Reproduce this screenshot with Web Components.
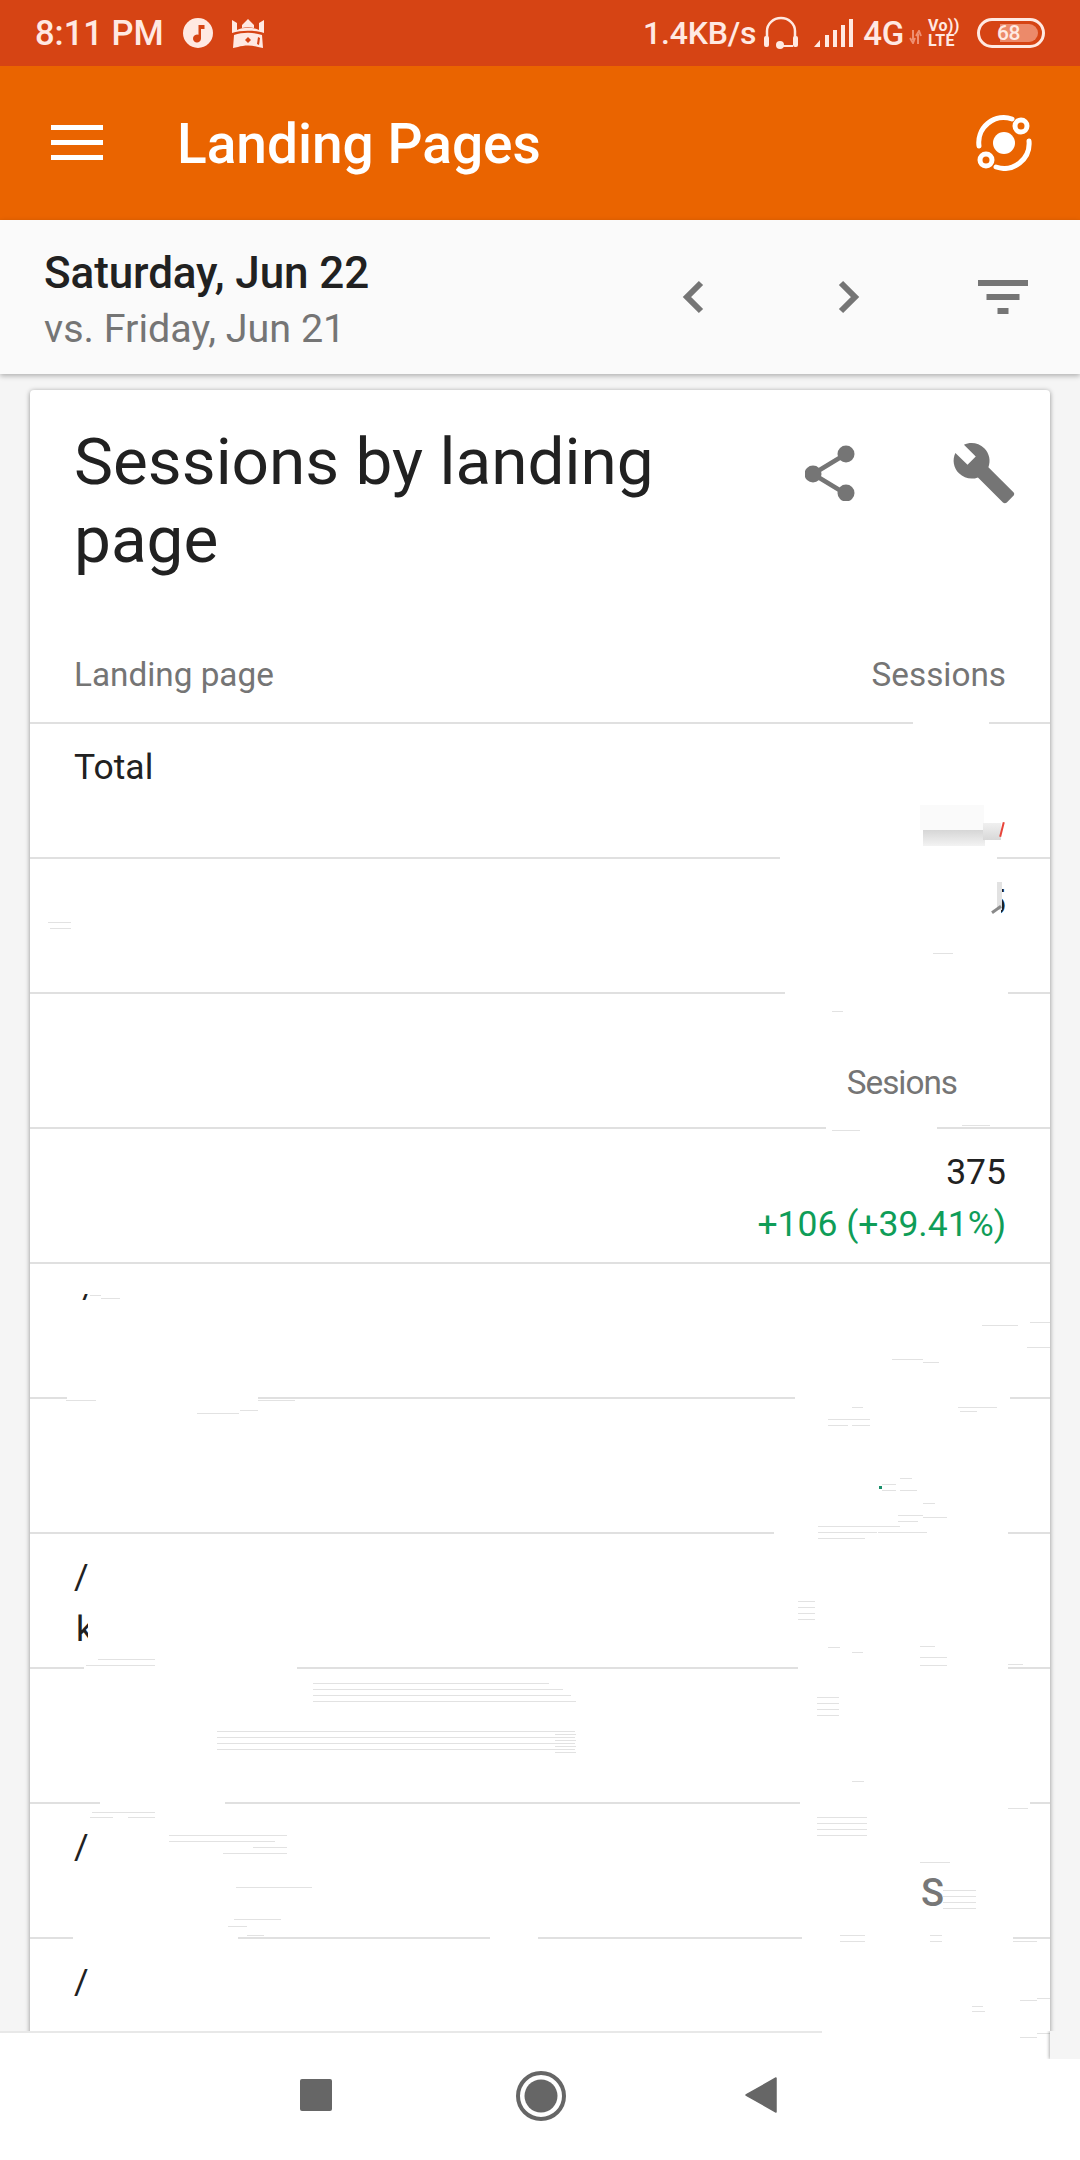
<!DOCTYPE html>
<html><head><meta charset="utf-8"><title>Landing Pages</title>
<style>
html,body{margin:0;padding:0;background:#f5f5f5}
body{font-family:Roboto,"Liberation Sans",sans-serif}
</style></head><body>
<app-page>
  <status-bar></status-bar>
  <app-bar>Landing Pages</app-bar>
  <date-bar><span slot="main">Saturday, Jun 22</span><span slot="sub">vs. Friday, Jun 21</span></date-bar>
  <page-main>
    <report-card>
      <span slot="title">Sessions by landing page</span>
      <report-row kind="head" line="30-913,989-1050"><span slot="left">Landing page</span><span slot="right">Sessions</span></report-row>
      <report-row line="30-780,997-1050"><span slot="left">Total</span></report-row>
      <report-row line="30-785,1008-1050"><span slot="right" style="display:block;clip-path:inset(0 0 0 15px);">5</span></report-row>
      <report-row line="30-826,937-1050"><span slot="right" style="display:block;height:52px"></span><span slot="right" style="display:block;margin:-6px 49px 0 0;color:#757575;font-size:33.3px;letter-spacing:-1px">Sesions</span></report-row>
      <report-row line="30-1050"><span slot="right" style="display:block">375</span><span slot="right" style="display:block;color:#0f9d58">+106 (+39.41%)</span></report-row>
      <report-row line="30-67,258-795,1010-1050"><span slot="left" style="display:block;clip-path:inset(0 0 33px 8px)">/</span></report-row>
      <report-row line="30-774,1008-1050"></report-row>
      <report-row line="30-84,297-798,1008-1050"><span slot="left" style="display:block">/</span><span slot="left" style="display:block;width:fit-content;clip-path:inset(0 6px 13px 0);margin-left:2px">k</span></report-row>
      <report-row line="30-100,225-800,1030-1050"></report-row>
      <report-row line="30-73,238-490,538-802,1013-1050"><span slot="left" style="display:block">/</span></report-row>
      <report-row line=""><span slot="left" style="display:block">/</span></report-row>
    </report-card>
  </page-main>
  <nav-bar></nav-bar>
  <stray-marks></stray-marks>
</app-page>
<script>
function def(name, html, init){
  customElements.define(name, class extends HTMLElement{
    constructor(){super();this.attachShadow({mode:'open'}).innerHTML=html;}
    connectedCallback(){ if(init) init.call(this,this.shadowRoot); }
  });
}
def('app-page',`<style>:host{display:flex;flex-direction:column;position:relative;width:1080px;height:2160px;overflow:hidden;background:#f5f5f5}</style><slot></slot>`);

def('status-bar',`<style>
:host{display:flex;align-items:center;height:66px;flex:none;background:#d64414;color:#ffe9e2;font:500 32px/1 Roboto,sans-serif;padding:0 35px 0 35px;box-sizing:border-box}
svg{display:block;flex:none}
.sp{flex:1}
.t{white-space:nowrap}
.lte{display:flex;flex-direction:column;align-items:flex-start;font:700 16px/15px Roboto,sans-serif;margin-left:6px;width:34px;letter-spacing:.3px}
.batt{margin-left:15px;position:relative;width:68px;height:30px;box-sizing:border-box;border:3px solid #ffe9e2;border-radius:15px;flex:none}
.batt i{position:absolute;left:20px;top:3px;bottom:3px;width:38px;background:#ec8a6a;border-radius:0 9px 9px 0}
.batt b{position:absolute;left:17px;top:0;font:500 21px/24px Roboto,sans-serif;letter-spacing:-.5px;color:#ffe9e2}
</style>
<span class="t" style="font-size:34.5px">8:11 PM</span>
<svg style="margin-left:19px" width="30" height="30" viewBox="0 0 30 30"><circle cx="15" cy="15" r="15" fill="#ffe9e2"/><path d="M15.500 7h6v4h-3.500v9.500a4 4 0 1 1-2.500-3.700z" fill="#d64414"/></svg>
<svg style="margin-left:18px" width="34" height="31" viewBox="0 0 34 31"><path d="M1 2l5 3v7c6-3 16-3 22 0V5l5-3v13c-9-3-23-3-32 0z" fill="#ffe9e2"/><path d="M11 7l6-6 6 6v3c-4-1-8-1-12 0z" fill="#ffe9e2"/><path d="M3 17c9-3 19-3 28 0l1 13-5-1c-6-2-14-2-20 0l-5 1z" fill="#ffe9e2"/><path d="M17 19l3 3-3 3-3-3z" fill="#d64414"/><path d="M27 19l2 1-1 7-2-1z" fill="#d64414"/></svg>
<span class="sp"></span>
<span class="t" style="letter-spacing:-.2px">1.4KB/s</span>
<svg style="margin-left:7px" width="36" height="34" viewBox="0 0 36 34"><path d="M4 24V15a14 13 0 0 1 28 0v9" fill="none" stroke="#ffe9e2" stroke-width="2.500"/><rect x="1" y="20" width="5" height="11" rx="2" fill="#ffe9e2"/><rect x="30" y="20" width="5" height="11" rx="2" fill="#ffe9e2"/><path d="M14 30h16" stroke="#ffe9e2" stroke-width="2"/><circle cx="17" cy="29" r="4" fill="#ffe9e2"/></svg>
<svg style="margin-left:15px" width="40" height="30" viewBox="0 0 40 30"><path d="M0 29L6 22V29zM11 17h4v12h-4zM19 12h4v17h-4zM27 7h4v22h-4zM35 1h4v28h-4z" fill="#ffe9e2"/></svg>
<span class="t" style="margin-left:9px;font-size:33px;letter-spacing:-.3px">4G</span>
<svg style="margin-left:5px;margin-top:8px" width="13" height="14" viewBox="0 0 13 14"><path d="M4 0v10M1 8l3 5 2-5" stroke="#ee8f72" stroke-width="2" fill="none"/><path d="M9 14V4M7 6l3-5 2 5" stroke="#ee8f72" stroke-width="2" fill="none"/></svg>
<span class="lte"><span>Vo))</span><span>LTE</span></span>
<span class="batt"><i></i><b>68</b></span>`);

def('app-bar',`<style>
:host{display:flex;align-items:center;height:154px;flex:none;background:#ea6400;color:#fff;box-sizing:border-box;padding:0 48px 0 51px}
.t{font:500 55px/1 Roboto,sans-serif;margin-left:74px;flex:1;position:relative;top:1px}
svg{display:block;flex:none}
</style>
<svg width="52" height="36" viewBox="0 0 52 36"><path d="M0 0h52v5H0zM0 15h52v5H0zM0 30h52v5H0z" fill="#fff"/></svg>
<span class="t"><slot></slot></span>
<svg width="56" height="56" viewBox="0 0 56 56"><circle cx="28" cy="28" r="11" fill="#fff"/><path d="M3 31A25 25 0 0 1 36 4M53 26A25 25 0 0 1 20 52" fill="none" stroke="#fff" stroke-width="5" stroke-linecap="round"/><circle cx="45" cy="11" r="6" fill="#ea6400" stroke="#fff" stroke-width="5"/><circle cx="10" cy="45" r="6" fill="#ea6400" stroke="#fff" stroke-width="5"/></svg>`);

def('date-bar',`<style>
:host{display:flex;align-items:flex-start;height:154px;flex:none;box-sizing:border-box;background:#fafafa;position:relative;z-index:2;box-shadow:0 2px 5px rgba(0,0,0,.28);padding:0 52px 0 44px}
.c{flex:1;padding-top:28px}
.m{display:block;font:500 44px/50px Roboto,sans-serif;color:#212121;letter-spacing:-.1px}
.s{display:block;font:400 39.5px/46px Roboto,sans-serif;color:#757575;margin-top:8px}
svg{display:block;flex:none;margin-top:60px}
</style>
<div class="c"><span class="m"><slot name="main"></slot></span><span class="s"><slot name="sub"></slot></span></div>
<svg width="22" height="34" viewBox="0 0 22 34"><path d="M19 3L5 17l14 14" fill="none" stroke="#757575" stroke-width="6"/></svg>
<svg style="margin-left:134px" width="22" height="34" viewBox="0 0 22 34"><path d="M3 3l14 14L3 31" fill="none" stroke="#757575" stroke-width="6"/></svg>
<svg style="margin-left:118px" width="50" height="34" viewBox="0 0 50 34"><path d="M0 0h50v6H0zM8.500 14h33v6h-33zM19.500 28h11v6h-11z" fill="#757575"/></svg>`);

def('page-main',`<style>:host{display:block;flex:1;min-height:0;overflow:hidden;padding:16px 30px 0;box-sizing:border-box}</style><slot></slot>`);

def('report-card',`<style>
:host{display:block;background:#fff;border-radius:4px 4px 0 0;box-shadow:0 1px 5px rgba(0,0,0,.42);color:#212121;height:2000px}
.h{display:flex;height:234px;padding:33px 0 0 44px;box-sizing:border-box}
.t{font:400 65.7px/78px Roboto,sans-serif;width:640px;color:#212121}
svg{display:block;flex:none}
</style>
<div class="h"><div class="t"><slot name="title"></slot></div>
<svg style="margin:22px 0 0 91px" width="50" height="56" viewBox="0 0 50 56"><path d="M8 29L41 9M8 29l33 20" stroke="#757575" stroke-width="4.500" fill="none"/><circle cx="8" cy="29" r="8.500" fill="#757575"/><circle cx="41" cy="9" r="8.500" fill="#757575"/><circle cx="41" cy="48" r="8.500" fill="#757575"/></svg>
<svg style="margin:17px 0 0 96px" width="66" height="66" viewBox="0 0 24 24"><path d="M22.700 19l-9.100-9.100c.9-2.300.4-5-1.500-6.900-2-2-5-2.400-7.400-1.300L9 6 6 9 1.600 4.700C.4 7.100.9 10.100 2.900 12.100c1.900 1.900 4.600 2.400 6.900 1.500l9.100 9.100c.4.4 1 .4 1.400 0l2.300-2.300c.5-.4.5-1.100.1-1.400z" fill="#757575"/></svg>
</div><slot></slot>`);

def('report-row',`<style>
:host{display:block;font:400 35.5px/52px Roboto,sans-serif;color:#212121}
:host([kind=head]){font-size:33.3px}
.r{display:flex;justify-content:space-between;height:133px;box-sizing:border-box;padding:17px 44px 0 44px}
:host([kind=head]) .r{height:98px;padding-top:25px;color:#757575}
.a{display:block}.b{display:block;text-align:right;white-space:nowrap}
.l{display:flex;height:2px}
.l i{display:block;height:2px;background:#e0e0e0;flex:none}
</style>
<div class="r"><div class="a"><slot name="left"></slot></div><div class="b"><slot name="right"></slot></div></div>
<div class="l"></div>`,function(s){
  const l=s.querySelector('.l');let p=30;
  (this.getAttribute('line')||'').split(',').filter(Boolean).forEach(seg=>{
    const [a,b]=seg.split('-').map(Number);
    const i=document.createElement('i');i.style.marginLeft=(a-p)+'px';i.style.width=(b-a)+'px';l.appendChild(i);p=b;
  });
});

def('nav-bar',`<style>
:host{display:flex;align-items:flex-start;height:129px;flex:none;background:#fff;position:relative;z-index:3;box-sizing:border-box}
svg{display:block;flex:none}
.top{position:absolute;left:0;top:0;width:822px;height:2px;background:#e8e8e8}
</style><div class="top"></div>
<svg style="margin:48px 0 0 300px" width="32" height="32" viewBox="0 0 32 32"><rect width="32" height="32" rx="2" fill="#666"/></svg>
<svg style="margin:40px 0 0 184px" width="50" height="50" viewBox="0 0 50 50"><circle cx="25" cy="25" r="23" fill="none" stroke="#666" stroke-width="4"/><circle cx="25" cy="25" r="16.500" fill="#666"/></svg>
<svg style="margin:46px 0 0 179px" width="32" height="36" viewBox="0 0 32 36"><path d="M31 1v34L1 18z" fill="#666" stroke="#666" stroke-width="1.500" stroke-linejoin="round"/></svg>`);

const LINES=[
[48,71,922],[50,71,928],[933,953,953],[832,843,1011],[962,990,1125],[832,860,1130],
[90,101,1295],[101,120,1298],[66,96,1400],[197,239,1413],[240,258,1410],[258,295,1400],
[892,923,1359],[923,939,1362],[982,1018,1325],[1030,1050,1322],[1027,1050,1347],
[828,852,1419],[852,863,1407],[852,870,1419],[852,870,1425],[828,848,1425],[958,997,1407],[960,977,1411],
[900,912,1478],[882,896,1484],[882,896,1490],[900,917,1490],[923,935,1503],[898,923,1515],[923,947,1517],[898,918,1521],
[818,900,1526],[818,877,1532],[818,865,1538],[878,927,1532],
[798,815,1601],[798,815,1607],[798,815,1613],[798,815,1619],[828,840,1647],[852,863,1652],[920,935,1646],[920,947,1657],[920,947,1665],
[98,155,1659],[86,155,1665],[313,549,1683],[313,563,1689],[313,571,1695],[313,576,1701],
[217,575,1731],[217,575,1737],[217,575,1743],[217,575,1749],[555,576,1734],[555,576,1740],[555,576,1746],[555,576,1752],
[817,839,1697],[817,839,1703],[817,839,1709],[817,839,1715],[852,864,1781],
[92,155,1812],[90,113,1817],[128,155,1817],[169,287,1835],[169,275,1841],[253,287,1847],[223,287,1853],[236,312,1887],[234,281,1919],[228,247,1926],[247,264,1935],
[817,867,1817],[817,867,1823],[817,867,1829],[817,867,1835],[920,950,1862],[943,976,1890],[943,976,1896],[943,976,1902],[943,976,1908],
[840,865,1935],[840,865,1941],[930,942,1935],[930,942,1941],[1008,1023,1664],[1008,1028,1808],[1013,1037,1941],
[1020,1037,2000],[1037,1050,1998],[972,983,2006],[972,985,2011],[1020,1037,2037],[1037,1050,2033]];
def('stray-marks',`<style>
:host{position:absolute;left:0;top:0;width:1080px;height:2160px;pointer-events:none;z-index:5;display:block}
.x{position:absolute;height:1px;background:#e2e2e2}
.p{position:absolute}
.s{position:absolute;font:500 38px/40px Roboto,sans-serif;color:#777}
</style>
<div class="p" style="left:923px;top:830px;width:62px;height:16px;background:linear-gradient(#d6d6d6,#f3f3f3)"></div>
<div class="p" style="left:920px;top:805px;width:64px;height:25px;background:#fafafa"></div>
<div class="p" style="left:983px;top:823px;width:18px;height:17px;background:linear-gradient(#f0f0f0,#d8d8d8)"></div>
<div class="p" style="left:1001px;top:822px;width:2px;height:15px;background:#e8443a;transform:rotate(14deg)"></div>
<div class="p" style="left:997px;top:882px;width:5px;height:28px;background:#e2e2e2"></div>
<div class="p" style="left:991px;top:908px;width:11px;height:3px;background:#8a8a8a;transform:rotate(-35deg)"></div>
<div class="p" style="left:879px;top:1486px;width:3px;height:3px;background:#1a8f6a"></div>
<span class="s" style="left:921px;top:1873px">S</span>
<div class="g"></div>
<div class="p" style="left:1050px;top:2031px;width:30px;height:28px;background:#f5f5f5;box-shadow:-1px 0 3px rgba(0,0,0,.3);clip-path:inset(0 0 0 -6px)"></div>`,function(s){
  const g=s.querySelector('.g');
  LINES.forEach(([a,b,y])=>{const d=document.createElement('div');d.className='x';d.style.cssText=`left:${a}px;width:${b-a}px;top:${y}px`;g.appendChild(d);});
});
</script>
</body></html>
